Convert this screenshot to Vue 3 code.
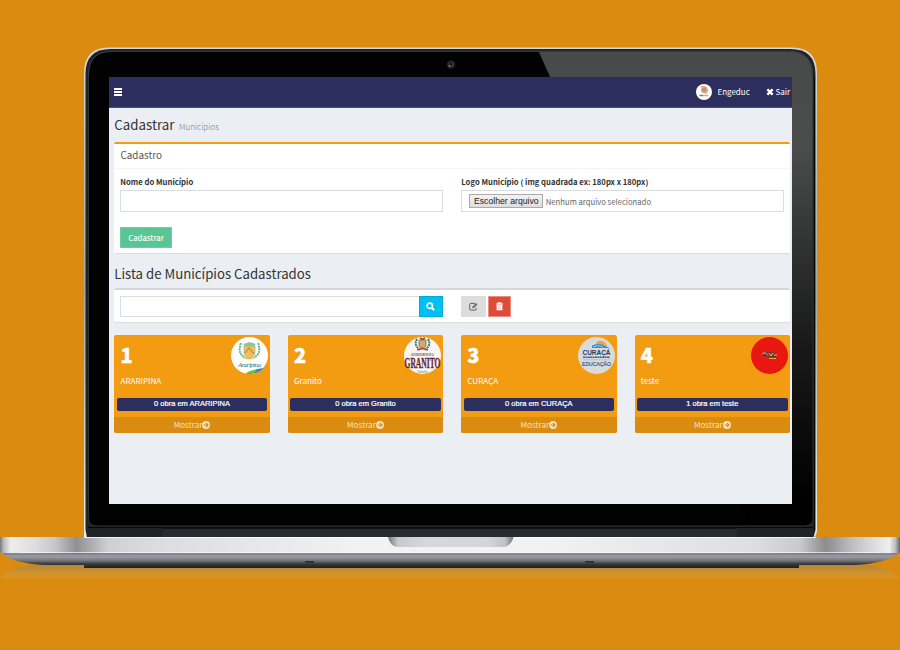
<script setup>
const cities = [
  { id: 1, name: 'ARARIPINA', works: 0 },
  { id: 2, name: 'Granito', works: 0 },
  { id: 3, name: 'CURAÇA', works: 0 },
  { id: 4, name: 'teste', works: 1 },
]
</script>

<template>
  <main class="stage">
    <svg class="laptop" viewBox="0 0 900 650" width="900" height="650" aria-hidden="true">
      <defs>
        <linearGradient id="gloss" x1="0" y1="0" x2="0" y2="1">
          <stop offset="0" stop-color="#484949" />
          <stop offset=".2" stop-color="#4b4c4c" />
          <stop offset=".6" stop-color="#1b1b1b" />
          <stop offset=".95" stop-color="#000" />
        </linearGradient>
        <linearGradient id="rim" x1="0" y1="0" x2="0" y2="1">
          <stop offset="0" stop-color="#d8d8d8" />
          <stop offset=".5" stop-color="#a9a9ad" />
          <stop offset="1" stop-color="#eeeeef" />
        </linearGradient>
        <linearGradient id="deck" x1="0" y1="0" x2="1" y2="0">
          <stop offset="0" stop-color="#77777b" />
          <stop offset=".004" stop-color="#b9b9bd" />
          <stop offset=".012" stop-color="#eee" />
          <stop offset=".04" stop-color="#dcdcdf" />
          <stop offset=".062" stop-color="#c5c5c8" />
          <stop offset=".085" stop-color="#8f8f94" />
          <stop offset=".12" stop-color="#cfcfd3" />
          <stop offset=".17" stop-color="#dcdce0" />
          <stop offset=".4" stop-color="#f2f2f3" />
          <stop offset=".6" stop-color="#f2f2f3" />
          <stop offset=".84" stop-color="#dedee1" />
          <stop offset=".89" stop-color="#c9c9cc" />
          <stop offset=".917" stop-color="#8b8b90" />
          <stop offset=".945" stop-color="#bcbcbf" />
          <stop offset=".965" stop-color="#d5d5d8" />
          <stop offset=".988" stop-color="#f0f0f0" />
          <stop offset=".995" stop-color="#bbb" />
          <stop offset="1" stop-color="#666" />
        </linearGradient>
        <linearGradient id="under" x1="0" y1="0" x2="0" y2="1">
          <stop offset="0" stop-color="#85868c" />
          <stop offset=".3" stop-color="#989ba1" />
          <stop offset=".55" stop-color="#717379" />
          <stop offset=".75" stop-color="#35373a" />
          <stop offset="1" stop-color="#1d1f21" />
        </linearGradient>
        <linearGradient id="notch" x1="0" y1="0" x2="1" y2="0">
          <stop offset="0" stop-color="#77777c" />
          <stop offset=".08" stop-color="#c8c8cd" />
          <stop offset=".3" stop-color="#d7d7dc" />
          <stop offset=".8" stop-color="#d4d4d9" />
          <stop offset=".93" stop-color="#c2c2c7" />
          <stop offset="1" stop-color="#77777c" />
        </linearGradient>
        <linearGradient id="reflection" x1="0" y1="0" x2="0" y2="1">
          <stop offset="0" stop-color="#b5853a" />
          <stop offset=".6" stop-color="#ce922f" />
          <stop offset="1" stop-color="#dc941e" />
        </linearGradient>
      </defs>
      <path d="M0 578C10 569 22 565 42 564H857C877 565 890 569 900 578Z" fill="url(#reflection)" />
      <path d="M84 537.5V73Q84 47.500 109.500 47.500H791.500Q817 47.500 817 73V530Q817 535 814 537.500Z" fill="url(#rim)" />
      <path d="M87 537.500L85.500 530V74Q85.500 49 110.500 49H790.500Q815.500 49 815.500 74V530L813.500 537.500Z" fill="#1f2327" />
      <path d="M88.500 518V75Q88.500 51 112 51H789Q812.500 51 812.500 75V518Q812.500 526 804.500 526H96.500Q88.500 526 88.500 518Z" fill="#020202" stroke="#2d2f31" />
      <path d="M538.500 51H789Q812.500 51 812.500 75V518Q812.500 525 805 525H749Z" fill="url(#gloss)" />
      <path d="M88.500 75Q88.500 51.500 112 51.500H789Q812.500 51.500 812.500 75" fill="none" stroke="#38393a" />
      <path d="M814.500 76V530" stroke="#070707" />
      <path d="M88 527.500H813" stroke="#050606" />
      <path d="M162 537V528H737V537Z" fill="#272b30" />
      <path d="M162 528H737" stroke="#0b0c0d" stroke-width="1.500" />
      <circle cx="451" cy="64.500" r="4.300" fill="#1e2023" />
      <circle cx="451" cy="64.500" r="2.800" fill="#35383f" />
      <circle cx="450.800" cy="64" r="1.500" fill="#101322" />
      <circle cx="449.500" cy="66" r=".8" fill="#a5adb8" />
      <path d="M0 552C8 560 25 564 45 565H84V568H799V565H855C875 564 892 560 900 552Z" fill="url(#under)" />
      <path d="M0 537H900V552L898 554H2L0 552Z" fill="url(#deck)" />
      <path d="M84 537.500H816" stroke="#fff" opacity=".8" />
      <path d="M20 552.500H880" stroke="#fff" opacity=".65" />
      <path d="M3 553.700H897" stroke="#707177" />
      <path d="M388 537H513.500Q511 547 502 547H399Q390 547 388 537Z" fill="url(#notch)" />
      <path d="M305 561.800h9M585 561.800h9" stroke="#1d1e20" stroke-width="1.200" />
    </svg>

    <section class="screen">
      <nav class="navbar">
        <button class="burger" aria-label="Menu"><i></i><i></i><i></i></button>
        <div class="account">
          <svg class="avatar" viewBox="0 0 16 16">
            <circle cx="8" cy="8" r="8" fill="#fff" />
            <path d="M4.500 3.200Q9 1 11 4.500Q12.500 8 9 9.500" fill="none" stroke="#f0a565" stroke-width="1.400" />
            <circle cx="8" cy="6" r="2.900" fill="#a8a5a7" />
            <path d="M6.500 5Q9 3.500 9 6.500Q7.500 8 6.500 6" fill="none" stroke="#e78136" />
            <path d="M3.500 11.500h4" stroke="#777982" stroke-width="1.500" />
            <path d="M7.500 11.500h5" stroke="#f2a065" stroke-width="1.500" />
          </svg>
          <span class="user">Engeduc</span>
          <svg class="times" viewBox="0 0 10 10"><path d="M1.700 1.700l6.600 6.600M8.300 1.700l-6.600 6.600" stroke="#fff" stroke-width="3" /></svg>
          <span class="exit">Sair</span>
        </div>
      </nav>

      <div class="content">
        <h1 class="title">Cadastrar <small>Municípios</small></h1>

        <div class="box box-form">
          <div class="box-header">Cadastro</div>
          <div class="fields">
            <div class="field">
              <label>Nome do Município</label>
              <div class="input"></div>
            </div>
            <div class="field">
              <label>Logo Município ( img quadrada ex: 180px x 180px)</label>
              <div class="input file">
                <span class="choose">Escolher arquivo</span>
                <span class="none">Nenhum arquivo selecionado</span>
              </div>
            </div>
          </div>
          <button class="submit">Cadastrar</button>
        </div>

        <h2 class="subtitle">Lista de Municípios Cadastrados</h2>

        <div class="box box-search">
          <div class="search">
            <div class="input"></div>
            <button class="find" aria-label="Buscar">
              <svg viewBox="0 0 10 10"><circle cx="4.200" cy="4.200" r="3" fill="none" stroke="#fff" stroke-width="1.800" /><path d="M6.400 6.400L9.200 9.200" stroke="#fff" stroke-width="2.100" /></svg>
            </button>
          </div>
          <div class="actions">
            <button class="edit" aria-label="Editar">
              <svg viewBox="0 0 10 10"><path d="M6.600 1.500H2Q.8 1.500 .8 2.700V7.800Q.8 9 2 9H6.700Q7.900 9 7.900 7.800V6.400" fill="none" stroke="#555" /><path d="M3.800 5.200L7.800 1.100L9.400 2.700L5.300 6.800H3.800Z" fill="#555" /><path d="M4.800 5.700L8 2.500" stroke="#ddd" stroke-width=".5" /></svg>
            </button>
            <button class="trash" aria-label="Excluir">
              <svg viewBox="0 0 10 10"><path d="M1 2.300H9M3.500 2V1H6.500V2" fill="none" stroke="#fff" stroke-width="1.200" /><path d="M1.800 3H8.200V9.200H1.800Z" fill="#fff" /><path d="M3.700 4V8.200M5 4V8.200M6.300 4V8.200" stroke="#e88a7f" stroke-width=".4" /></svg>
            </button>
          </div>
        </div>

        <div class="cards">
          <article v-for="city in cities" :key="city.id" class="card">
            <div class="card-top">
              <div class="info">
                <strong>{{ city.id }}</strong>
                <span>{{ city.name }}</span>
              </div>
              <svg v-if="city.id === 1" class="crest" viewBox="0 0 37 37">
                <circle cx="18.500" cy="18.500" r="18.500" fill="#fff" />
                <path d="M10 6Q6 17 14 20M27 6Q31 17 23 20" fill="none" stroke="#65b78c" stroke-width="2" stroke-dasharray="2 .7" />
                <path d="M12 7L18.500 5L25 7L23 9H14Z" fill="#89c8a0" />
                <path d="M13 9H24V16Q23 20 18.500 21Q14 20 13 16Z" fill="#f0c263" stroke="#8ab58c" stroke-width=".7" />
                <path d="M14 16L18 11L23 17" fill="none" stroke="#e18a35" stroke-width="1.500" />
                <path d="M12 20Q18.500 23 25 20" fill="none" stroke="#e8bd52" stroke-width="1.500" />
                <text x="18.500" y="29.500" text-anchor="middle" font-family="Liberation Serif, serif" font-style="italic" font-size="7" textLength="23" fill="#20798b">Araripina</text>
                <path d="M15 36.500Q23 32 33 31L29 34Q22 38 15 36.500Z" fill="#2287ca" />
                <path d="M15 36Q20 33 26 33L24 35.500Q19 37.500 15 36Z" fill="#71bb46" />
              </svg>
              <svg v-else-if="city.id === 2" class="crest" viewBox="0 0 37 37">
                <circle cx="18.500" cy="18.500" r="18.500" fill="#f7f6f4" />
                <path d="M13 2Q9 9 17 13M24 2Q28 9 20 13" fill="none" stroke="#4f7154" stroke-width="2" stroke-dasharray="2 .7" />
                <path d="M15 3H22V9Q18.500 13 15 9Z" fill="#d8a768" stroke="#6d8781" />
                <path d="M16 1L18.500 2.500L21 1" stroke="#a13b38" stroke-width="1.500" fill="none" />
                <path d="M13 13L18.500 11.500L24 13" fill="none" stroke="#ad4542" stroke-width="1.500" />
                <text x="18.500" y="18.500" text-anchor="middle" font-family="Liberation Serif, serif" font-weight="bold" font-size="3" textLength="23" lengthAdjust="spacingAndGlyphs" fill="#6b2c34">GOVERNO MUNICIPAL</text>
                <text x="18.500" y="31" text-anchor="middle" font-family="Liberation Serif, serif" font-weight="bold" font-size="14" textLength="36" lengthAdjust="spacingAndGlyphs" fill="#661d2b" stroke="#661d2b" stroke-width=".3">GRANITO</text>
                <text x="18.500" y="35.500" text-anchor="middle" font-family="Liberation Serif, serif" font-style="italic" font-size="3.500" textLength="11" fill="#73858f">Trabalho</text>
              </svg>
              <svg v-else-if="city.id === 3" class="crest" viewBox="0 0 37 37">
                <circle cx="18.500" cy="18.500" r="18.500" fill="#d9dadc" />
                <path d="M18 7Q19 2.500 24 4Q28 5 29 9Z" fill="#f2a33d" />
                <path d="M14 8.500Q21 4.500 31 11H14Z" fill="#2e91c9" />
                <path d="M15 10Q20 7 25 10" fill="none" stroke="#c4e3ee" stroke-width=".7" />
                <text x="18.500" y="18" text-anchor="middle" font-family="Liberation Sans, sans-serif" font-weight="bold" font-size="7.500" textLength="28" lengthAdjust="spacingAndGlyphs" fill="#173c67">CURAÇÁ</text>
                <path d="M5 20.300H32" stroke="#416480" stroke-width="1.600" stroke-dasharray="2 .4" />
                <path d="M5 22.800H32" stroke="#9badb9" stroke-width=".5" />
                <text x="18.500" y="29" text-anchor="middle" font-family="Liberation Sans, sans-serif" font-size="6" textLength="29" lengthAdjust="spacingAndGlyphs" fill="#275071" stroke="#275071" stroke-width=".15">EDUCAÇÃO</text>
              </svg>
              <svg v-else class="crest" viewBox="0 0 37 37">
                <circle cx="18.500" cy="18.500" r="18.500" fill="#e81712" />
                <path d="M11 17L14 14.500L17 16L20 14.500L23 16H25V20L20 21L17 19.500L14 20Z" fill="#643b2c" />
                <path d="M11 17L14 15.500L17 18.500M18 16L20 19L22 16" fill="none" stroke="#e2b79b" stroke-width="1" />
                <path d="M18 21.500H25" stroke="#e2b142" stroke-width="1" />
                <path d="M23 18H26" stroke="#9ba43f" stroke-width="1.500" />
              </svg>
            </div>
            <div class="works">{{ city.works }} obra em {{ city.name }}</div>
            <div class="more">
              Mostrar
              <svg viewBox="0 0 8 8"><circle cx="4" cy="4" r="3.900" fill="#f7e3c2" /><path d="M1.600 4H6M3.900 1.900L6 4L3.900 6.100" fill="none" stroke="#d98c10" stroke-width="1.200" /></svg>
            </div>
          </article>
        </div>
      </div>
    </section>
  </main>
</template>

<style>
body { margin: 0; background: #db8c10; }
</style>

<style scoped>
.stage { width: 900px; height: 650px; display: grid; background: #db8c10; overflow: hidden; font-family: "Noto Sans CJK SC", "Noto Sans", sans-serif; color: #333; }
.laptop, .screen { grid-area: 1 / 1; }
.screen { box-sizing: border-box; width: 683px; height: 427px; margin: 77px 0 0 109px; background: #ebeff4; overflow: hidden; }
button { border: 0; padding: 0; margin: 0; font-family: inherit; display: flex; align-items: center; justify-content: center; border-radius: 0; }
svg { display: block; flex: none; }
.navbar { box-sizing: border-box; height: 31px; display: flex; align-items: center; justify-content: space-between; padding: 0 2px 0 5px; background: #2c2f5e; border-bottom: 1px solid #4d4f7b; }
.burger { flex-direction: column; gap: 1px; background: none; }
.burger i { width: 8px; height: 1.700px; background: #fff; }
.account { display: flex; align-items: center; color: #fff; font-size: 8px; line-height: 16px; }
.avatar { width: 16px; height: 16px; }
.user { width: 49px; margin-left: 5.500px; }
.times { width: 8px; height: 8px; margin-right: 1px; }
.content { padding: 0 2px 0 5.300px; }
.title, .subtitle { margin: 0; font-weight: 400; }
.title { height: 34px; line-height: 33px; font-size: 13.300px; }
.title small { font-size: 8.200px; font-weight: 300; color: #7c8085; margin-left: 1.500px; }
.subtitle { height: 34px; line-height: 39.500px; font-size: 13.200px; }
.box { box-sizing: border-box; background: #fff; border-radius: 2px; border-bottom: 1px solid #dadde3; }
.box-form { height: 112px; border-top: 2px solid #f39c12; }
.box-header { height: 24px; line-height: 23px; padding-left: 6.200px; font-size: 9.900px; color: #555; border-bottom: 1px solid #f4f4f4; }
.fields { display: grid; grid-template-columns: 322.500px 322.500px; gap: 18.500px; padding: 5px 6px 0; }
.field label { display: block; height: 16px; line-height: 15px; font-size: 7.700px; font-weight: 700; white-space: nowrap; }
.input { box-sizing: border-box; height: 21.500px; border: 1px solid #d9dce3; background: #fff; }
.file { display: flex; align-items: center; padding-left: 7px; gap: 2.500px; }
.choose { box-sizing: border-box; width: 74px; height: 13.500px; border: 1px solid #aaa; background: linear-gradient(#f3f3f3, #dedede); color: #222; font: 8.700px/12px "Liberation Sans", sans-serif; text-align: center; white-space: nowrap; }
.none { font-size: 7.700px; line-height: 14px; color: #666; white-space: nowrap; padding-top: 1.500px; }
.submit { width: 51.500px; height: 21px; margin: 15.500px 0 0 6px; color: #f3fff8; background: #5ac594; border: 1px solid #6ccda1; font-size: 7.700px; font-weight: 500; }
.box-search { height: 35px; border-top: 2px solid #d2d6de; display: grid; grid-template-columns: 322.500px 1fr; gap: 18.500px; padding: 6px 6px 0; }
.search { display: flex; height: 21px; }
.search .input { flex: 1; height: 21px; border-right: 0; }
.find { width: 24px; height: 21px; background: #00c0ef; border: 1px solid #00acd6; }
.find svg { width: 9px; height: 9px; }
.actions { display: flex; gap: 2px; height: 21px; }
.edit { width: 24.500px; background: #ddd; }
.edit svg { width: 9px; height: 9px; }
.trash { width: 23px; background: #dd4b39; border: 1px solid #ef8b80; }
.trash svg { width: 9px; height: 9px; }
.cards { display: grid; grid-template-columns: repeat(4, 1fr); gap: 18px; padding-top: 12px; }
.card { box-sizing: border-box; height: 98px; background: #f39c12; color: #fff; border-radius: 2px; overflow: hidden; display: flex; flex-direction: column; }
.card-top { display: flex; justify-content: space-between; height: 63px; padding: 0 2px 0 6.200px; box-sizing: border-box; }
.info { display: flex; flex-direction: column; }
.info strong { box-sizing: border-box; font-size: 20px; height: 36.500px; padding-top: 5px; line-height: 30px; font-weight: 900; -webkit-text-stroke: .4px #fff; }
.info span { font-size: 8.100px; line-height: 17px; }
.crest { width: 37px; height: 37px; margin-top: 1.500px; overflow: visible; }
.works { height: 13px; margin: 0 2.500px; border-radius: 2px; background: #2c2f5e; font: 7.500px/12.500px "Liberation Sans", sans-serif; -webkit-text-stroke: .2px #fff; text-align: center; }
.more { height: 16px; margin-top: auto; display: flex; align-items: center; justify-content: center; gap: 0; background: #da8c10; color: #f7e0bc; font-size: 8.100px; line-height: 16px; }
.more svg { width: 8px; height: 8px; }
</style>
